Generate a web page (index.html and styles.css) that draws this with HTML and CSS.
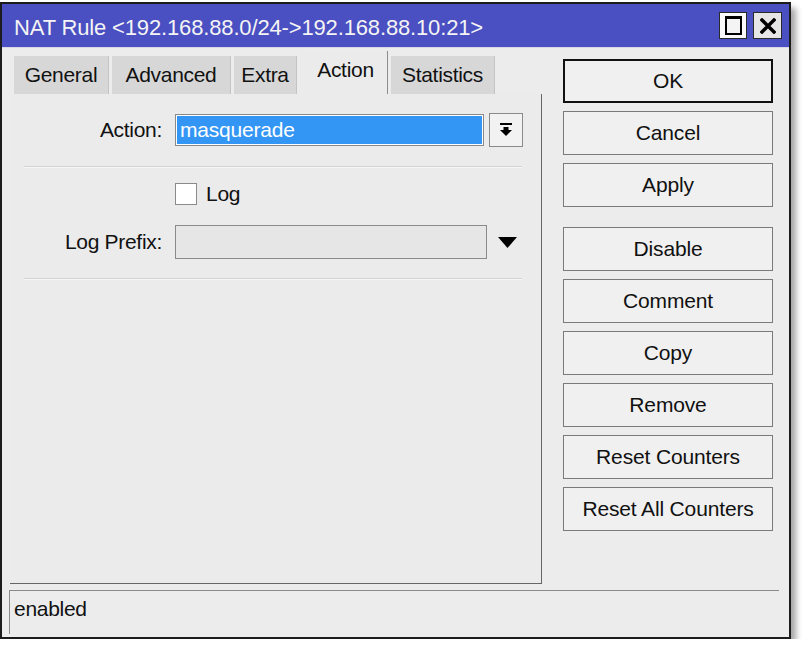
FILE: index.html
```html
<!DOCTYPE html>
<html>
<head>
<meta charset="utf-8">
<title>NAT Rule</title>
<link rel="stylesheet" href="styles.css">
</head>
<body>
<div class="window">
  <div class="titlebar">
    <span class="title">NAT Rule &lt;192.168.88.0/24-&gt;192.168.88.10:21&gt;</span>
    <div class="tbtns">
      <span class="tbtn max"><span class="maxicon"></span></span>
      <span class="tbtn close">
        <svg width="16" height="16" viewBox="0 0 16 16"><path d="M2 2 L14 14 M14 2 L2 14" stroke="#000" stroke-width="3.4" stroke-linecap="square"/></svg>
      </span>
    </div>
  </div>
  <div class="main">
    <div class="leftcol">
      <div class="tabs">
        <span class="tab t1">General</span>
        <span class="tab t2">Advanced</span>
        <span class="tab t3">Extra</span>
        <span class="tab t4 active">Action</span>
        <span class="tab t5">Statistics</span>
      </div>
      <div class="panel">
        <div class="row row-action">
          <span class="label">Action:</span>
          <span class="select">masquerade</span>
          <span class="dropbtn">
            <svg width="12" height="14" viewBox="0 0 12 14"><rect x="0" y="0" width="12" height="2" fill="#000"/><rect x="3.5" y="4" width="5" height="3" fill="#000"/><polygon points="0,7 12,7 6,13" fill="#000"/></svg>
          </span>
        </div>
        <div class="sep"></div>
        <div class="row row-log">
          <span class="label"></span>
          <span class="checkbox"></span>
          <span class="cblabel">Log</span>
        </div>
        <div class="row row-prefix">
          <span class="label">Log Prefix:</span>
          <span class="input"></span>
          <svg class="tri" width="19" height="11" viewBox="0 0 19 11"><polygon points="0,0 19,0 9.5,11" fill="#000"/></svg>
        </div>
        <div class="sep sep2"></div>
      </div>
    </div>
    <div class="rightcol">
      <div class="btn ok">OK</div>
      <div class="btn">Cancel</div>
      <div class="btn">Apply</div>
      <div class="btn gap">Disable</div>
      <div class="btn">Comment</div>
      <div class="btn">Copy</div>
      <div class="btn">Remove</div>
      <div class="btn">Reset Counters</div>
      <div class="btn">Reset All Counters</div>
    </div>
  </div>
  <div class="status">enabled</div>
</div>
</body>
</html>
```

FILE: styles.css
```css
* { box-sizing: border-box; }
html, body { margin: 0; padding: 0; background: #ffffff; }
body {
  font-family: "Liberation Sans", Arial, sans-serif;
  color: #111;
}
.window {
  margin-top: 2px;
  width: 791px;
  height: 637px;
  border: 2px solid #1c1c1c;
  background: #ececec;
  box-shadow: 5px 6px 6px rgba(0,0,0,0.35);
  display: flex;
  flex-direction: column;
}
.titlebar {
  height: 44px;
  background: #4a4fc2;
  display: flex;
  align-items: center;
  justify-content: space-between;
  padding: 0 7px 0 12px;
  border-bottom: 1px solid #d8d8e8;
}
.title {
  color: #f4f4f4;
  font-size: 22px;
  letter-spacing: -0.15px;
  padding-top: 5px;
}
.tbtns { display: flex; gap: 6px; align-items: center; }
.tbtn {
  width: 28px;
  height: 27px;
  border: 1px solid #2a2a2a;
  display: flex;
  align-items: center;
  justify-content: center;
}
.tbtn.max { background: #fafafa; }
.tbtn.close { width: 29px; background: #e6e6e6; }
.maxicon {
  width: 17px;
  height: 19px;
  border: 2px solid #000;
  border-top-width: 3px;
  background: #f4f4f4;
}
.main {
  height: 542px;
  display: flex;
  padding-top: 3px;
}
.leftcol {
  margin-left: 8px;
  width: 532px;
  display: flex;
  flex-direction: column;
}
.tabs {
  display: flex;
  align-items: flex-end;
  gap: 3px;
  padding-left: 4px;
  height: 43px;
}
.tab {
  height: 38px;
  background: #d7d7d7;
  font-size: 21px;
  letter-spacing: -0.3px;
  display: flex;
  align-items: center;
  justify-content: center;
  border-right: 1px solid #c4c4c4;
}
.t1 { width: 95px; }
.t2 { width: 119px; }
.t3 { width: 63px; }
.t4 { width: 88px; }
.t5 { width: 104px; }
.tab.active {
  height: 43px;
  background: #ebebeb;
  padding: 0 0 5px 4px;
  border-right: 1px solid #8c8c8c;
}
.panel {
  height: 490px;
  background: #ebebeb;
  border-right: 1px solid #666;
  border-bottom: 1px solid #666;
  padding-top: 19px;
}
.row {
  display: flex;
  align-items: center;
}
.label {
  width: 152px;
  text-align: right;
  font-size: 21px;
  letter-spacing: -0.3px;
  margin-right: 13px;
}
.row-action { height: 34px; }
.select {
  width: 309px;
  height: 32px;
  border: 1px solid #8a8a8a;
  box-shadow: inset 0 0 0 1px #ffffff;
  background: #3496f4;
  color: #fff;
  font-size: 21px;
  letter-spacing: -0.2px;
  padding-left: 4px;
  line-height: 30px;
}
.dropbtn {
  width: 34px;
  height: 34px;
  margin-left: 5px;
  background: #f2f2f2;
  border: 1px solid #8a8a8a;
  display: flex;
  align-items: center;
  justify-content: center;
}
.sep {
  height: 2px;
  margin: 19px 19px 0 14px;
  background: #d4d4d4;
  border-bottom: 1px solid #f6f6f6;
}
.row-log { margin-top: 15px; height: 22px; }
.checkbox {
  width: 22px;
  height: 22px;
  background: #fff;
  border: 1px solid #8a8a8a;
}
.cblabel {
  margin-left: 9px;
  font-size: 21px;
  letter-spacing: -0.3px;
}
.row-prefix { margin-top: 20px; height: 34px; }
.input {
  width: 312px;
  height: 34px;
  background: #e6e6e6;
  border: 1px solid #8a8a8a;
}
.tri { margin-left: 11px; }
.sep2 { margin-top: 19px; }
.rightcol {
  margin-left: 21px;
  margin-top: 8px;
  width: 210px;
  display: flex;
  flex-direction: column;
  gap: 8px;
}
.btn {
  height: 44px;
  background: #f0f0f0;
  border: 1px solid #7a7a7a;
  font-size: 21px;
  letter-spacing: -0.15px;
  display: flex;
  align-items: center;
  justify-content: center;
}
.btn.ok { border: 2px solid #111; }
.btn.gap { margin-top: 12px; }
.status {
  margin: 0 10px 0 7px;
  height: 44px;
  border-top: 1px solid #8a8a8a;
  border-left: 1px solid #8a8a8a;
  font-size: 21px;
  letter-spacing: -0.3px;
  padding: 6px 0 0 4px;
}
```
